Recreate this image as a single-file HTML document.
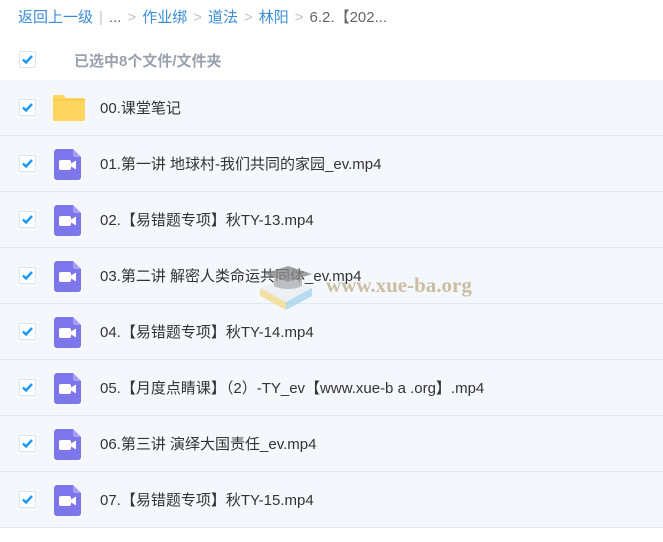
<!DOCTYPE html>
<html><head><meta charset="utf-8"><style>
*{margin:0;padding:0;box-sizing:border-box}
body{width:663px;height:542px;background:#fff;font-family:"Liberation Sans","Noto Sans CJK SC",sans-serif;position:relative;overflow:hidden}
.bc{position:absolute;left:18px;top:8px;font-size:15px;color:#3b8cd9;white-space:nowrap;line-height:20px}
.bc .g{color:#c0c4cc;margin:0 6px}
.bc .k{color:#666}
.cb{position:absolute;left:19px;width:17px;height:17px;border:1px solid #dfe3ea;border-radius:2px;background:#fff}
.cb svg{position:absolute;left:1px;top:1px}
.hdr{position:absolute;left:74px;top:50px;font-size:15px;color:#9aa1ae;font-weight:bold}
.row{position:absolute;left:0;width:663px;height:56px;background:#f4f8fd;border-bottom:1px solid #e2e8f0}
.row .cb{top:19px}
.row .ic{position:absolute;left:54px;top:13px}
.row .t{position:absolute;left:100px;top:17px;font-size:15px;color:#333;white-space:nowrap}
.wm{position:absolute;left:326px;top:273px;font-family:"Liberation Serif",serif;font-weight:bold;font-size:21px;color:rgba(190,170,130,.75)}
</style></head><body>
<div class="bc">返回上一级<span class="g">|</span><span class="k">...</span><span class="g">&gt;</span>作业绑<span class="g">&gt;</span>道法<span class="g">&gt;</span>林阳<span class="g">&gt;</span><span class="k">6.2.【202...</span></div>
<div class="cb" style="top:51px"><svg width="13" height="13" viewBox="0 0 13 13"><path d="M2 6.5l3 3 6-6.5" stroke="#1a9af0" stroke-width="2.4" fill="none"/></svg></div>
<div class="hdr">已选中8个文件/文件夹</div>

<div class="row" style="top:80px"><div class="cb"><svg width="13" height="13" viewBox="0 0 13 13"><path d="M2 6.5l3 3 6-6.5" stroke="#1a9af0" stroke-width="2.4" fill="none"/></svg></div>
<svg class="ic" style="left:52px;top:14px" width="34" height="28" viewBox="0 0 34 28"><path d="M1 3a2 2 0 0 1 2-2h8l3 3h17a2 2 0 0 1 2 2v19a2 2 0 0 1-2 2H3a2 2 0 0 1-2-2z" fill="#fdd55f"/><path d="M1 6h32" stroke="#f5c542" stroke-width="1"/></svg>
<div class="t">00.课堂笔记</div></div>

<div class="row" style="top:136px"><div class="cb"><svg width="13" height="13" viewBox="0 0 13 13"><path d="M2 6.5l3 3 6-6.5" stroke="#1a9af0" stroke-width="2.4" fill="none"/></svg></div>
<svg class="ic" width="27" height="31" viewBox="0 0 27 31"><path d="M3 0h16l8 8v20a3 3 0 0 1-3 3H3a3 3 0 0 1-3-3V3a3 3 0 0 1 3-3z" fill="#7d76ea"/><path d="M19 0v6a2 2 0 0 0 2 2h6z" fill="#a39ef2"/><rect x="5" y="11" width="12" height="10" rx="2" fill="#fff"/><path d="M17 14.5l5-3v9l-5-3z" fill="#fff"/></svg>
<div class="t">01.第一讲 地球村-我们共同的家园_ev.mp4</div></div>

<div class="row" style="top:192px"><div class="cb"><svg width="13" height="13" viewBox="0 0 13 13"><path d="M2 6.5l3 3 6-6.5" stroke="#1a9af0" stroke-width="2.4" fill="none"/></svg></div>
<svg class="ic" width="27" height="31" viewBox="0 0 27 31"><path d="M3 0h16l8 8v20a3 3 0 0 1-3 3H3a3 3 0 0 1-3-3V3a3 3 0 0 1 3-3z" fill="#7d76ea"/><path d="M19 0v6a2 2 0 0 0 2 2h6z" fill="#a39ef2"/><rect x="5" y="11" width="12" height="10" rx="2" fill="#fff"/><path d="M17 14.5l5-3v9l-5-3z" fill="#fff"/></svg>
<div class="t">02.【易错题专项】秋TY-13.mp4</div></div>

<div class="row" style="top:248px"><div class="cb"><svg width="13" height="13" viewBox="0 0 13 13"><path d="M2 6.5l3 3 6-6.5" stroke="#1a9af0" stroke-width="2.4" fill="none"/></svg></div>
<svg class="ic" width="27" height="31" viewBox="0 0 27 31"><path d="M3 0h16l8 8v20a3 3 0 0 1-3 3H3a3 3 0 0 1-3-3V3a3 3 0 0 1 3-3z" fill="#7d76ea"/><path d="M19 0v6a2 2 0 0 0 2 2h6z" fill="#a39ef2"/><rect x="5" y="11" width="12" height="10" rx="2" fill="#fff"/><path d="M17 14.5l5-3v9l-5-3z" fill="#fff"/></svg>
<div class="t">03.第二讲 解密人类命运共同体_ev.mp4</div></div>

<div class="row" style="top:304px"><div class="cb"><svg width="13" height="13" viewBox="0 0 13 13"><path d="M2 6.5l3 3 6-6.5" stroke="#1a9af0" stroke-width="2.4" fill="none"/></svg></div>
<svg class="ic" width="27" height="31" viewBox="0 0 27 31"><path d="M3 0h16l8 8v20a3 3 0 0 1-3 3H3a3 3 0 0 1-3-3V3a3 3 0 0 1 3-3z" fill="#7d76ea"/><path d="M19 0v6a2 2 0 0 0 2 2h6z" fill="#a39ef2"/><rect x="5" y="11" width="12" height="10" rx="2" fill="#fff"/><path d="M17 14.5l5-3v9l-5-3z" fill="#fff"/></svg>
<div class="t">04.【易错题专项】秋TY-14.mp4</div></div>

<div class="row" style="top:360px"><div class="cb"><svg width="13" height="13" viewBox="0 0 13 13"><path d="M2 6.5l3 3 6-6.5" stroke="#1a9af0" stroke-width="2.4" fill="none"/></svg></div>
<svg class="ic" width="27" height="31" viewBox="0 0 27 31"><path d="M3 0h16l8 8v20a3 3 0 0 1-3 3H3a3 3 0 0 1-3-3V3a3 3 0 0 1 3-3z" fill="#7d76ea"/><path d="M19 0v6a2 2 0 0 0 2 2h6z" fill="#a39ef2"/><rect x="5" y="11" width="12" height="10" rx="2" fill="#fff"/><path d="M17 14.5l5-3v9l-5-3z" fill="#fff"/></svg>
<div class="t">05.【月度点睛课】（2）-TY_ev【www.xue-b a .org】.mp4</div></div>

<div class="row" style="top:416px"><div class="cb"><svg width="13" height="13" viewBox="0 0 13 13"><path d="M2 6.5l3 3 6-6.5" stroke="#1a9af0" stroke-width="2.4" fill="none"/></svg></div>
<svg class="ic" width="27" height="31" viewBox="0 0 27 31"><path d="M3 0h16l8 8v20a3 3 0 0 1-3 3H3a3 3 0 0 1-3-3V3a3 3 0 0 1 3-3z" fill="#7d76ea"/><path d="M19 0v6a2 2 0 0 0 2 2h6z" fill="#a39ef2"/><rect x="5" y="11" width="12" height="10" rx="2" fill="#fff"/><path d="M17 14.5l5-3v9l-5-3z" fill="#fff"/></svg>
<div class="t">06.第三讲 演绎大国责任_ev.mp4</div></div>

<div class="row" style="top:472px"><div class="cb"><svg width="13" height="13" viewBox="0 0 13 13"><path d="M2 6.5l3 3 6-6.5" stroke="#1a9af0" stroke-width="2.4" fill="none"/></svg></div>
<svg class="ic" width="27" height="31" viewBox="0 0 27 31"><path d="M3 0h16l8 8v20a3 3 0 0 1-3 3H3a3 3 0 0 1-3-3V3a3 3 0 0 1 3-3z" fill="#7d76ea"/><path d="M19 0v6a2 2 0 0 0 2 2h6z" fill="#a39ef2"/><rect x="5" y="11" width="12" height="10" rx="2" fill="#fff"/><path d="M17 14.5l5-3v9l-5-3z" fill="#fff"/></svg>
<div class="t">07.【易错题专项】秋TY-15.mp4</div></div>

<svg style="position:absolute;left:256px;top:262px" width="62" height="50" viewBox="0 0 62 50"><path d="M4 26l26-10 26 10-26 14z" fill="#e9eef2" opacity=".85"/><path d="M4 26l26 14v8L4 34z" fill="#f3d98f" opacity=".8"/><path d="M30 40l26-14v8L30 48z" fill="#a7d3ee" opacity=".8"/><path d="M8 12l24-8 24 8-24 8z" fill="#8a8a8a" opacity=".8"/><path d="M18 16v8c8 4 20 4 28 0v-8l-14 4z" fill="#aaa" opacity=".7"/></svg>
<div class="wm">www.xue-ba.org</div>
</body></html>
